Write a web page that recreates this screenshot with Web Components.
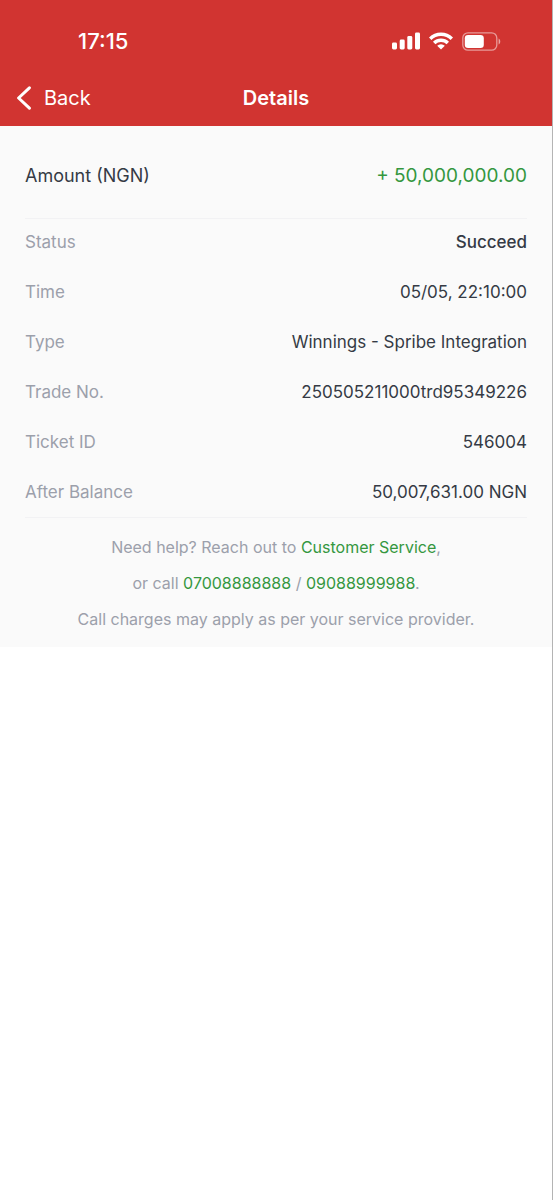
<!DOCTYPE html>
<html lang="en">
<head>
<meta charset="utf-8">
<meta name="viewport" content="width=device-width, initial-scale=1">
<title>Details</title>
<style>
    body {
        margin: 0;
        min-height: 100vh;
        box-sizing: border-box;
        border-right: 1px solid #b4b4b4;
        background: #fff;
        color: #353a45;
        font-family: Inter, "Liberation Sans", sans-serif;
        --brand: #d13431;
        --panel: #fafafa;
        --line: #f2f2f4;
        --muted: #9ca0ab;
        --green: #35973f;
    }
</style>
</head>
<body>

<transaction-page></transaction-page>

<script>
/*
Status bar of the phone: clock, signal, wifi and battery.

Attributes:
  - time: the text of the clock
 */
window.customElements.define("status-bar", class extends HTMLElement {

    #template = `
        <style>
            :host {
                display: flex;
                align-items: center;
                justify-content: space-between;
                height: 70px;
                padding: 12px 51px 0 78px;
                box-sizing: border-box;
                color: white;
            }

            time {
                font-size: 22px;
                font-weight: 500;
                line-height: 28px;
            }

            .icons {
                display: flex;
                align-items: center;
                gap: 9px;
            }

            svg { display: block; }
        </style>

        <time></time>
        <div class="icons">
            <svg width="28" height="18" viewBox="0 0 28 18" fill="currentColor" role="img" aria-label="Signal">
                <rect x="0" y="10.5" width="5" height="7" rx="1.4"/>
                <rect x="7.7" y="7.5" width="5" height="10" rx="1.4"/>
                <rect x="15.3" y="4" width="5" height="13.5" rx="1.4"/>
                <rect x="23" y="0.5" width="5" height="17" rx="1.4"/>
            </svg>
            <svg width="24" height="18" viewBox="0 0 24 18" fill="none" stroke="currentColor" stroke-width="3.4" role="img" aria-label="Wi-Fi">
                <path d="M1.2 6.7a15.2 15.2 0 0 1 21.6 0"/>
                <path d="M5.2 11a9.6 9.6 0 0 1 13.6 0"/>
                <path d="M12 17.6 8.2 13.8a5.4 5.4 0 0 1 7.6 0z" fill="currentColor" stroke="none"/>
            </svg>
            <svg width="39" height="19" viewBox="0 0 39 19" role="img" aria-label="Battery">
                <rect x="0.8" y="0.8" width="34" height="17.4" rx="5.2" fill="none" stroke="currentColor" stroke-width="1.3" opacity="0.5"/>
                <path d="M36.6 6.5c2.2.7 2.2 5.3 0 6z" fill="currentColor" opacity="0.55"/>
                <rect x="2.8" y="3" width="19" height="13" rx="3.3" fill="currentColor"/>
            </svg>
        </div>
    `;

    constructor() {
        super();
        this.attachShadow({ mode: "open" });
        this.shadowRoot.innerHTML = this.#template;
    }

    static get observedAttributes() {
        return ["time"];
    }

    attributeChangedCallback(prop, old, newValue) {
        this.shadowRoot.querySelector("time").textContent = newValue;
    }
});

/*
Navigation bar with a back button. The slot is the title.

Events:
  - back: when the back button is clicked
 */
window.customElements.define("nav-bar", class extends HTMLElement {

    #template = `
        <style>
            :host {
                display: grid;
                grid-template-columns: 1fr auto 1fr;
                align-items: center;
                height: 56px;
                padding: 0 16px;
                color: white;
            }

            button {
                display: flex;
                align-items: center;
                gap: 12px;
                justify-self: start;
                padding: 0;
                border: 0;
                background: none;
                color: inherit;
                font: 400 20px/28px Inter, "Liberation Sans", sans-serif;
                cursor: pointer;
            }

            h1 {
                margin: 0;
                font-size: 20px;
                font-weight: 600;
                line-height: 28px;
            }
        </style>

        <button type="button">
            <svg width="16" height="24" viewBox="0 0 16 24" fill="none" stroke="currentColor" stroke-width="3" stroke-linecap="round" stroke-linejoin="round" aria-hidden="true">
                <path d="M13.4 1.8 2.6 12l10.8 10.2"/>
            </svg>
            <span>Back</span>
        </button>
        <h1><slot></slot></h1>
    `;

    constructor() {
        super();
        this.attachShadow({ mode: "open" });
        this.shadowRoot.innerHTML = this.#template;
        this.shadowRoot.querySelector("button").addEventListener("click", () => {
            this.dispatchEvent(new CustomEvent("back"));
        });
    }
});

/*
One line of the details: label at the left, slotted value at the right.

Attributes:
  - label: the text of the label
  - kind: "amount" for the large first line, "strong" for a bolder value
 */
window.customElements.define("detail-row", class extends HTMLElement {

    #template = `
        <style>
            :host { display: block; }

            dl {
                display: flex;
                align-items: center;
                justify-content: space-between;
                gap: 16px;
                margin: 0;
                font-size: 17px;
                line-height: 22px;
            }

            dt { color: var(--muted); }

            dd {
                margin: 0;
                text-align: right;
            }

            :host([kind="strong"]) dd { font-weight: 500; }

            :host([kind="amount"]) dt {
                color: inherit;
                font-size: 18px;
            }

            :host([kind="amount"]) dd {
                color: var(--green);
                font-size: 19px;
            }
        </style>

        <dl>
            <dt></dt>
            <dd><slot></slot></dd>
        </dl>
    `;

    constructor() {
        super();
        this.attachShadow({ mode: "open" });
        this.shadowRoot.innerHTML = this.#template;
    }

    static get observedAttributes() {
        return ["label"];
    }

    attributeChangedCallback(prop, old, newValue) {
        this.shadowRoot.querySelector("dt").textContent = newValue;
    }
});

window.customElements.define("help-note", class extends HTMLElement {

    #template = `
        <style>
            :host {
                display: block;
                padding: 11px 0 10px;
                color: var(--muted);
                font-size: 16px;
                line-height: 36px;
                text-align: center;
            }

            p { margin: 0; }

            a {
                color: var(--green);
                text-decoration: none;
            }
        </style>

        <p>Need help? Reach out to <a href="#customer-service">Customer Service</a>,</p>
        <p>or call <a href="tel:07008888888">07008888888</a> / <a href="tel:09088999988">09088999988</a>.</p>
        <p>Call charges may apply as per your service provider.</p>
    `;

    constructor() {
        super();
        this.attachShadow({ mode: "open" });
        this.shadowRoot.innerHTML = this.#template;
    }
});

window.customElements.define("transaction-page", class extends HTMLElement {

    #template = `
        <style>
            :host { display: block; }

            header { background: var(--brand); }

            main {
                padding: 0 25px;
                background: var(--panel);
            }

            .amount {
                padding: 39px 0 31px;
                border-bottom: 1px solid var(--line);
            }

            .rows {
                display: flex;
                flex-direction: column;
                gap: 28px;
                padding: 12px 0 14px;
                border-bottom: 1px solid var(--line);
            }
        </style>

        <header>
            <status-bar time="17:15"></status-bar>
            <nav-bar>Details</nav-bar>
        </header>
        <main>
            <div class="amount">
                <detail-row label="Amount (NGN)" kind="amount">+ 50,000,000.00</detail-row>
            </div>
            <div class="rows">
                <detail-row label="Status" kind="strong">Succeed</detail-row>
                <detail-row label="Time">05/05, 22:10:00</detail-row>
                <detail-row label="Type">Winnings - Spribe Integration</detail-row>
                <detail-row label="Trade No.">250505211000trd95349226</detail-row>
                <detail-row label="Ticket ID">546004</detail-row>
                <detail-row label="After Balance">50,007,631.00 NGN</detail-row>
            </div>
            <help-note></help-note>
        </main>
    `;

    constructor() {
        super();
        this.attachShadow({ mode: "open" });
        this.shadowRoot.innerHTML = this.#template;
        this.shadowRoot.querySelector("nav-bar").addEventListener("back", () => history.back());
    }
});
</script>
</body>
</html>
